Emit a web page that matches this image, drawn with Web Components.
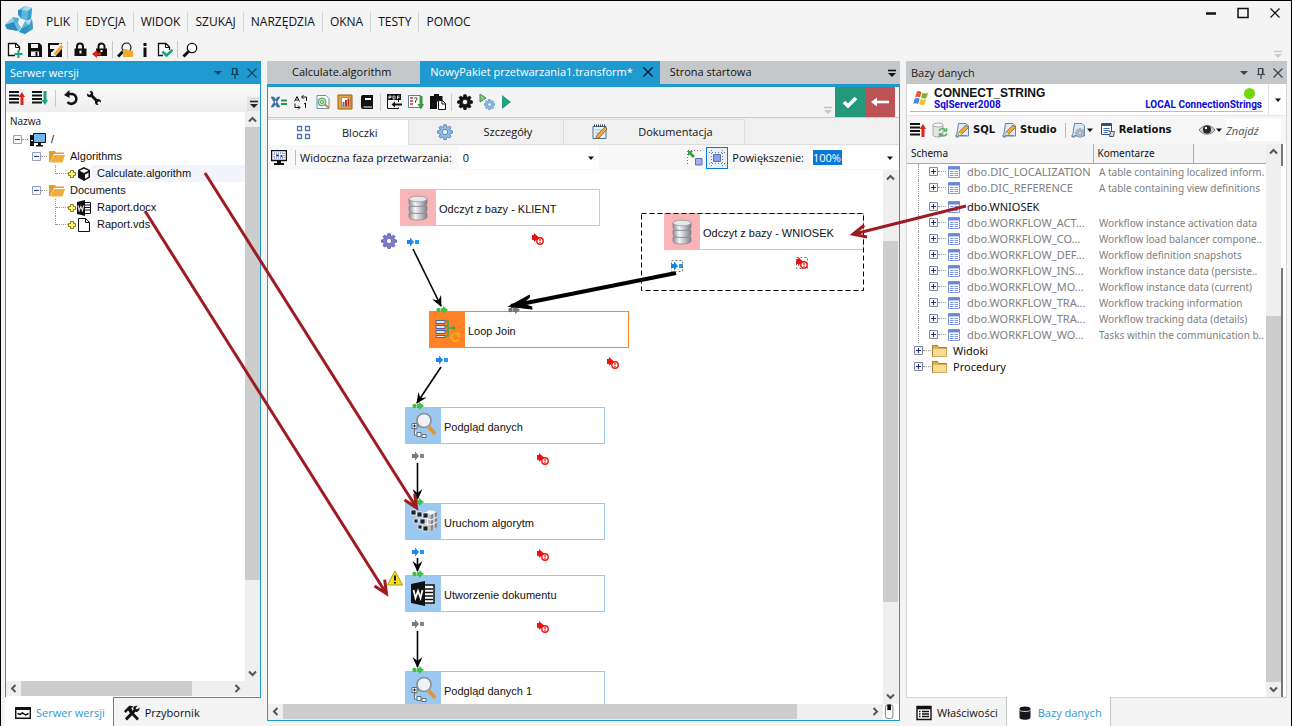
<!DOCTYPE html>
<html lang="pl">
<head>
<meta charset="utf-8">
<title>NowyPakiet przetwarzania1.transform</title>
<style>
  html, body { margin: 0; height: 100%; }
  body {
    --ui: "Open Sans", "Noto Sans", sans-serif;
    --list: "Liberation Sans", Arial, sans-serif;
    --accent: #1f9ad0;
    --chrome: #f4f4f5;
    font: 11px/16px var(--ui);
    color: #111;
    background: var(--chrome);
    overflow: hidden;
  }
</style>
</head>
<body>
<app-shell></app-shell>
<script>
const RESET = `
  :host { box-sizing: border-box; }
  *, *::before { box-sizing: border-box; }
  button, input, select { font: inherit; color: inherit; margin: 0; padding: 0; border: 0; background: none; border-radius: 0; outline: 0; }
  button { display: inline-flex; align-items: center; justify-content: center; }
  a { color: inherit; text-decoration: none; }
`;

function define(name, css, html) {
  const tpl = document.createElement('template');
  tpl.innerHTML = `<style>${RESET}${css}</style>${html}`;
  customElements.define(name, class extends HTMLElement {
    constructor() {
      super();
      this.attachShadow({ mode: 'open' }).append(tpl.content.cloneNode(true));
    }
  });
}

/* ---------- icons, 16 x 16 unless a size is given ---------- */
const GEAR = (fill, stroke) => `<g fill="${fill}" stroke="${stroke}" stroke-width=".8"><path fill-rule="evenodd" d="M6.800.8h2.400l.4 2 1.300.5 1.700-1.200 1.400 1.400-1.100 1.800.5 1.200 2 .4v2.300l-2 .4-.5 1.300 1.100 1.700-1.500 1.500-1.700-1.100-1.200.5-.4 2h-2.400l-.4-2-1.200-.5-1.700 1.100-1.500-1.500 1.100-1.700-.5-1.300-2-.4V6.900l2-.4.5-1.200L2.100 3.500l1.400-1.400 1.700 1.200 1.200-.5zM8 5.300a2.700 2.700 0 1 0 0 5.400 2.700 2.700 0 0 0 0-5.400z"/></g>`;
const SHEET = `<path d="M4.500 1.500h7.500l2.500 2.500v10h-9a2 2 0 0 1-3 .5z" fill="#d9eafa" stroke="#5b87b8"/><path d="M1.500 13.500a1.500 1.500 0 0 0 3 0h8" fill="none" stroke="#5b87b8"/>`;
const PENCIL = `<path d="M5 10l7-7 2.500 2.500-7 7-3.300 1z" fill="#f2a73b" stroke="#9a6420" stroke-width=".8"/><path d="M5 10l2.500 2.500-3.300 1z" fill="#f7e3c0"/>`;
const LIST = `<path d="M0 2h10M0 5.500h10M0 9h10M0 12.500h10" stroke="#111" stroke-width="2"/>`;
const GLASS = `<circle cx="10" cy="6" r="4.700" fill="#fff" stroke="#111" stroke-width="1.300"/><path d="M6.500 9.500L1.500 14.500" stroke="#111" stroke-width="3"/>`;
const ICONS = {
  logo: [30, `<path d="M13 5l7-4 7 2-1 11-4 2-7-3z" fill="#5fb8db"/><path d="M20 1l7 2-4 3-6-1z" fill="#a5dbee"/><path d="M13 5l4 0-1 8-3-3z" fill="#2f93bf"/><path d="M23 6l4-3-1 11-4 2z" fill="#3d9ec8"/><path d="M0 20l8-8 6 1-1 5 3 5-3 3-11-2z" fill="#4fb0d6"/><path d="M0 20l8-8 1 5z" fill="#8ed0e8"/><path d="M0 20l9-3 4 9-11-2z" fill="#2c8dba"/><path d="M9 17l4 1 3 5-3 3z" fill="#6fc1e0"/><path d="M16 24l4-8 7-2 1 10-8 5-6-2z" fill="#5fb8db"/><path d="M20 16l7-2-3 6z" fill="#b4e1f1"/><path d="M24 20l3-6 1 10-5 3z" fill="#3d9ec8"/><path d="M16 24l8-4-1 7-3 2-6-2z" fill="#2f93bf"/>`],
  newdoc: [16, `<path d="M8 13.500H1.500v-12H9l3.500 3.500v3" fill="#fff" stroke="#111" stroke-width="1.300"/><path d="M8.500 1.500V5.500h4" fill="none" stroke="#111"/><path d="M7.500 12h8M11.500 8v8" stroke="#1fa080" stroke-width="2"/>`],
  save: [16, `<path d="M1 1h11.500L15 3.500V15H1z" fill="#111"/><path d="M4 2h7v4H4zM4 9.500h8V14H4z" fill="#f4f4f5"/><path d="M8.500 10h2v4h-2z" fill="#111"/>`],
  saveedit: [16, `<path d="M1 1h14v14H1z" fill="#111"/><path d="M3 3h8v4H3zM4 10h4v4H4z" fill="#f4f4f5"/><path d="M15 2.500L6 13" stroke="#f4f4f5" stroke-width="5"/><path d="M15 4L8 12.500" stroke="#f0ab33" stroke-width="3"/>`],
  lock: [16, `<path d="M5 7V4.500a3 3 0 0 1 6 0V7" fill="none" stroke="#111" stroke-width="2"/><path d="M2.500 6.500h12V14h-12z" fill="#111"/><path d="M7.500 8.500h2v3h-2z" fill="#fff"/>`],
  lockout: [16, `<path d="M6.500 7V4.500a3 3 0 0 1 6 0V7" fill="none" stroke="#111" stroke-width="2"/><path d="M4 6.500h11V14H4z" fill="#111"/><path d="M8.500 8h2v2h-2z" fill="#fff"/><path d="M0 12l5-4v2.500h4v3H5V16z" fill="#d8261a"/>`],
  findfolder: [16, `<circle cx="9.500" cy="5.500" r="4.500" fill="#f4f4f5" stroke="#111" stroke-width="1.200"/><path d="M6 9.500L1 14.500" stroke="#111" stroke-width="3"/><path d="M6 7h4l1 1.500h5V15H6z" fill="#f0ab33"/>`],
  info: [16, `<path d="M6.500 1h3v3h-3zM6.500 5.500h3V15h-3z" fill="#111"/>`],
  doccheck: [16, `<path d="M6 13.500H1.500v-12H9l3.500 3.500v3" fill="#fff" stroke="#111" stroke-width="1.300"/><path d="M8.500 1.500V5.500h4" fill="none" stroke="#111"/><path d="M5.500 9.500l4 4L15.500 8" fill="none" stroke="#1fa080" stroke-width="2.600"/>`],
  search: [16, GLASS],
  listup: [16, LIST + `<path d="M13 15V5" stroke="#d8261a" stroke-width="3"/><path d="M9.500 7L13 2l3 5z" fill="#d8261a"/>`],
  listdown: [16, LIST + `<path d="M13 1v11" stroke="#1fa080" stroke-width="3"/><path d="M9.500 10l3.500 5 3-5z" fill="#1fa080"/>`],
  undo: [16, `<path d="M5 4h4.500a5 5 0 1 1-5 8" fill="none" stroke="#111" stroke-width="2.600"/><path d="M1 5l5.500-5v8z" fill="#111"/>`],
  wrench: [16, `<path d="M5 5l7 7" stroke="#111" stroke-width="3"/><path d="M1 3.500L3.500 5 5 3.500 3.500 1C6 .5 8 2.500 7 5L5 7C2.500 8 .5 6 1 3.500zM15 12.500L12.500 11 11 12.500l1.500 2.500c-2.500.5-4-1.500-3.500-4l2-2c2.500-.5 4.500 1 4 3.500z" fill="#111"/>`],
  pc: [16, `<path d="M0 3h4v11H0z" fill="#111"/><path d="M1 8h2v1H1z" fill="#fff"/><path d="M3.500 1.500h12v9h-12z" fill="#6db7f2" stroke="#111"/><path d="M8 11h3v2h2v1.500H6V13h2z" fill="#111"/>`],
  folder: [16, `<path d="M0 2h6l1 1.500h8V5H5L1 13H0z" fill="#e89c28"/><path d="M5 6h11l-2.500 7.500H1z" fill="#f2ac3a"/>`],
  cube: [16, `<path d="M8 1l6 3v7.500L8 15l-6-3.500V4z" fill="#111"/><path d="M3.500 4.800L8 2.700l4.500 2.100L8 7z" fill="#fff"/><path d="M9 8.500l3.500-1.800v4.100L9 12.800z" fill="#fff"/>`],
  word: [16, `<path d="M8 2.500h6.500v11H8z" fill="#fff" stroke="#111"/><path d="M9 5h5M9 7.500h5M9 10h5" stroke="#111"/><path d="M1 2l8-2v16l-8-2z" fill="#111"/><path d="M2 5.500l1.200 5 1.600-4 1.600 4 1.300-5" fill="none" stroke="#ddd" stroke-width="1.200"/>`],
  page: [16, `<path d="M2.500 1.500h7l4 4v9h-11z" fill="#fff" stroke="#111"/><path d="M9.500 1.500v4h4" fill="none" stroke="#111"/>`],
  plus: [8, `<path d="M2.500.5h3v2h2v3h-2v2h-3v-2h-2v-3h2z" fill="#fbf56a" stroke="#857b22"/>`],
  xeq: [16, `<path d="M0 3h3l6 10H6zM9 3H6.500L0 13h2.500z" fill="#3a6ea5" stroke="#3a6ea5" stroke-width=".6"/><path d="M10 6.500h6M10 10h6" stroke="#2b9348" stroke-width="2"/>`],
  ab: [16, `<path d="M1.500 7.500L4 2.500l2.500 5M2.500 6h3" fill="none" stroke="#111"/><path d="M9 3h4.500v4M10.500 1L8.500 3l2 2M2 9.500v4h4.500M5 11.500l2 2-2 2M11 10l1.500-1v5" fill="none" stroke="#111"/>`],
  docview: [16, `<path d="M2 1.500h9l3 3v10H2z" fill="#fff" stroke="#6d8fb5"/><circle cx="7" cy="8" r="4" fill="#bfe5c4" stroke="#4aa157"/><circle cx="7" cy="8" r="1.500" fill="#fff" stroke="#4aa157"/><path d="M10 10.500l4 3.500" stroke="#d98a2b" stroke-width="2"/>`],
  chart: [16, `<path d="M1 1h14v14H1z" fill="#e8a33a" stroke="#96591a"/><path d="M4.500 3.500h9v9h-9z" fill="#fff" stroke="#96591a" stroke-width=".6"/><path d="M6.500 12V8" stroke="#3b78c4" stroke-width="2"/><path d="M9 12V6" stroke="#d8261a" stroke-width="2"/><path d="M11.500 12V4.500" stroke="#b03020" stroke-width="2"/>`],
  book: [16, `<path d="M2 3a2 2 0 0 1 2-2h10v14H4a2 2 0 0 1-2-2z" fill="#111"/><path d="M6 4h6v2H6z" fill="#fff"/><path d="M4.500 13h8.500" stroke="#fff"/>`],
  pdf: [16, `<path d="M1 0h14v6H1z" fill="#111"/><path d="M3 5V2h2v1.500H3M7 2v3h1.500l.5-.5v-2L8.500 2zM11.500 5V2h2M11.500 3.500h2" stroke="#fff" fill="none" stroke-width=".8"/><path d="M1.500 6v8.500h11V13.500M12.500 8V6" fill="none" stroke="#111"/><path d="M16 11.500H9V13.500L5.500 10.500 9 7.500V9.500h7z" fill="#111"/>`],
  export: [16, `<path d="M.5 1.500h12v12H.5z" fill="#fff" stroke="#5b7ea5"/><path d="M2 4h3M2 7h3M2 10h3" stroke="#c33" stroke-width="1.500"/><path d="M6.500 4.500c1-1.500 3-1 2.500.5L7.500 7v1.500" fill="none" stroke="#333"/><path d="M13 2v9" stroke="#3a9a44" stroke-width="3"/><path d="M9.500 10L13 15.500l3-5.500z" fill="#3a9a44"/>`],
  paste: [16, `<path d="M0 2h4V0h5v2h3.500v4H9L7 8v7H0z" fill="#111"/><path d="M8.500 6.500h4l3 3v6h-7z" fill="#fff" stroke="#111"/><path d="M12 6.500V10h3.500" fill="none" stroke="#111"/>`],
  geardark: [16, GEAR('#111', '#111')],
  gearblue: [16, GEAR('#8ebbe8', '#3f76b4')],
  gearviolet: [16, GEAR('#7d7dcf', '#5656a8')],
  playgear: [16, `<path d="M1 0l6 4-6 4z" fill="#8cc88c" stroke="#3f8f4c"/><g transform="translate(5 5) scale(.69)">${GEAR('#8ebbe8', '#3f76b4')}</g>`],
  play: [16, `<path d="M1 1l9 7-9 7z" fill="#1fa080"/>`],
  check: [16, `<path d="M2 8l4 4L14 4" fill="none" stroke="#fff" stroke-width="3.600"/>`],
  back: [18, `<path d="M4 9h14" stroke="#fff" stroke-width="2.600"/><path d="M0 9l6-4.500v9z" fill="#fff"/>`],
  blocks: [16, `<path d="M1.500 1.500h4v4h-4zM9.500 1.500h4v4h-4zM1.500 9.500h4v4h-4zM9.500 9.500h4v4h-4z" fill="#fff" stroke="#5379a8" stroke-width="1.300"/>`],
  notes: [16, `<path d="M1 2.500h13v12H1z" fill="#e6f1fb" stroke="#46709e"/><path d="M2 1.500h12" stroke="#333" stroke-dasharray="1 1" stroke-width="2"/><path d="M3 6h8M3 9h6" stroke="#9bbbdc"/><path d="M13 3l2 2-8 9-3 .5.500-3z" fill="#f2a73b" stroke="#8b5a1a" stroke-width=".8"/>`],
  screen: [16, `<path d="M.5.5h15v10H.5z" fill="#fff" stroke="#111" stroke-width="1.500"/><path d="M3 3h10v5H3z" fill="#fff" stroke="#3a50b8" stroke-dasharray="1 1"/><path d="M5 4.500h3v2H5zM9.500 5h2v2h-2z" fill="#2a3a9a"/><path d="M6 11h4v2h3v2H3v-2h3z" fill="#111"/>`],
  snap: [16, `<path d="M1 .5h15M.5 1v15" stroke="#777" stroke-dasharray="1 2"/><path d="M1 6V1h5L4.500 2.500 8 6 6 8 2.500 4.500z" fill="#35a53c"/><path d="M8.500 8.500h6.500v6.500H8.500z" fill="#9fb0e6" stroke="#5a6fc0"/>`],
  gridcenter: [16, `<path d="M0 2.500h16M0 13.500h16M2.500 0v16M13.500 0v16" stroke="#777" stroke-dasharray="1 2"/><path d="M4.500 4.500h7v7h-7z" fill="#8d9fe0" stroke="#5a6fc0"/>`],
  windows: [16, `<path d="M4 1.500c2-1 3 0 4.500.7L7 7.500C5 6.500 4 6.500 2 7.200z" fill="#e8592b"/><path d="M9.500 2.800c2 1 3.500.8 5.500.2L13.500 8c-2 .8-3.500.6-5.500-.2z" fill="#7db52d"/><path d="M1.700 8.500c2-.8 3-.7 5 .2L5.200 14c-2-1-3-1-5-.2z" fill="#3f8fd8"/><path d="M7.700 9c2 .9 3.500 1 5.500.3l-1.500 5.200c-2 .7-3.500.6-5.500-.3z" fill="#f5c02c"/>`],
  dbsync: [16, `<path d="M1 3v10c0 2.500 10 2.500 10 0V3" fill="#e3e5e3" stroke="#aaa"/><ellipse cx="6" cy="3" rx="5" ry="2" fill="#f8f8f8" stroke="#aaa"/><path d="M7 9c1-3 5-3 6-1M14.500 6v3h-3M15 11.500c-1 3-5 3-6.500 1M7.500 15v-3h3" fill="none" stroke="#4fae57" stroke-width="1.500"/>`],
  sheetedit: [16, SHEET + PENCIL],
  sheetgear: [16, SHEET + `<g transform="translate(5 6) scale(.62)">${GEAR('#b8bec6', '#6b7480')}</g>`],
  relations: [16, `<path d="M1.500 1.500h10v11h-10z" fill="#fff" stroke="#2f4f86"/><path d="M1.500 3h10" stroke="#2f4f86" stroke-width="2"/><path d="M3.500 6.500h6M3.500 8.500h6M3.500 10.500h4" stroke="#456bad"/><path d="M8 8l4 4" stroke="#4b6e8e"/><path d="M10.500 9.500h4l-1 5h-4z" fill="#d6e2ea" stroke="#555"/>`],
  eye: [16, `<path d="M0 8c4-6 12-6 16 0-4 5.500-12 5.500-16 0z" fill="#ccc" stroke="#777"/><circle cx="8" cy="7.500" r="4" fill="#222"/><circle cx="7" cy="6" r="1.200" fill="#fff"/>`],
  grid: [14, `<path d="M1.500 1.500h11v11h-11z" fill="#fff" stroke="#8298dc"/><path d="M1 3h12" stroke="#6f86d8" stroke-width="3"/><path d="M3 6.500h3.500M7.500 6.500H11M3 8.500h3.500M7.500 8.500H11M3 10.500h3.500M7.500 10.500H11" stroke="#7d9ae0"/>`],
  folderold: [15, `<path d="M.5 2.500h5l1 2h8v9H.5z" fill="#e0b350" stroke="#a87f2c"/><path d="M1 6h13.500v7.500H1z" fill="#f6dc92"/>`],
  monitor: [16, `<path d="M.7 2.700h14.600v10.600H.7z" fill="#fff" stroke="#111" stroke-width="1.400"/><path d="M0 2h16v3H0z" fill="#111"/><path d="M2.500 8.500l2.500 1L7.500 8l3 2 3-1.500" fill="none" stroke="#111" stroke-width="1.500"/>`],
  tools: [16, `<path d="M2 14.500L11 5" stroke="#111" stroke-width="3"/><path d="M9 3c1-2 3-2.500 4.500-2L11.500 3l1.500 1.500L15.500 2.500c.5 2-1 4.500-3.500 4.500z" fill="#111"/><path d="M14 14.500L6 6" stroke="#111" stroke-width="2.600"/><path d="M0 6l5-5c2-.5 3.500 0 4.500.8L7 3l1.500 2L6 7.500 4 5.500 1.500 8z" fill="#111"/>`],
  props: [16, `<path d="M1 1.500h14v13H1z" fill="#fff" stroke="#111" stroke-width="1.400"/><path d="M1 3h14" stroke="#111" stroke-width="2.600"/><path d="M3 6.500h1.500M6 6.500h7M3 9h1.500M6 9h7M3 11.500h1.500M6 11.500h7" stroke="#111" stroke-width="1.300"/>`],
  db: [16, `<path d="M2.500 4v8.500c0 3 11 3 11 0V4z" fill="#15161c"/><ellipse cx="8" cy="3.500" rx="5.500" ry="2" fill="#15161c"/><path d="M2.500 5c1 2 10 2 11 0" fill="none" stroke="#fff" stroke-width=".8"/>`],
  mouse: [16, `<path d="M1.500 2.500a2 2 0 0 1 2-2h4a2 2 0 0 1 2 2v10a2.500 2.500 0 0 1-2.500 2.500H4a2.500 2.500 0 0 1-2.500-2.500z" fill="#fff" stroke="#777"/><path d="M3.500 0h4v6h-4z" fill="#111"/>`],
  min: [12, `<path d="M1 6.500h10" stroke="#111" stroke-width="2.500"/>`],
  max: [12, `<path d="M1 1.500h10v9H1z" fill="none" stroke="#111" stroke-width="1.500"/>`],
  close: [12, `<path d="M1.500 1.500l9 9M10.500 1.500l-9 9" stroke="currentColor" stroke-width="1.200"/>`],
  pin: [12, `<path d="M3.500 7V1.500h4V7M8 1.500V7M2 7.500h8M6 8v4" fill="none" stroke="currentColor" stroke-width="1.200"/>`],
  caret: [8, `<path d="M1 2.500h6L4 6z" fill="currentColor"/>`],
  caretbig: [10, `<path d="M1 3h8L5 7z" fill="currentColor"/>`],
  more: [10, `<path d="M1 2.500h8" stroke="currentColor" stroke-width="1.600"/><path d="M1 5h8L5 9z" fill="currentColor"/>`],
  minus: [9, `<path d="M.5.5h8v8h-8z" fill="#f7f8fb" stroke="#98a2b4"/><path d="M2 4.500h5" stroke="#2b3fa0"/>`],
  expand: [9, `<path d="M.5.5h8v8h-8z" fill="#f7f8fb" stroke="#848c9c"/><path d="M2 4.500h5M4.500 2v5" stroke="#1c2c80"/>`],
  disks: [30, `<defs><linearGradient id="m"><stop offset="0" stop-color="#8c8f94"/><stop offset=".35" stop-color="#f4f5f6"/><stop offset="1" stop-color="#7e8187"/></linearGradient></defs><g fill="url(#m)" stroke="#7d8086" stroke-width=".7"><path d="M5 20v4c0 4 18 4 18 0v-4z"/><path d="M5 13v4.500c0 4 18 4 18 0V13z"/><path d="M5 6v4.500c0 4 18 4 18 0V6z"/></g><ellipse cx="14" cy="6" rx="9" ry="2.800" fill="#e6e8ea" stroke="#8b8e94" stroke-width=".7"/>`],
  join: [30, `<g fill="#dbe6f7" stroke="#4a62a0"><path d="M3 5.500h9v3H3zM3 10.500h9v3H3zM3 15.500h9v3H3zM3 20.500h9v2H3z"/></g><path d="M12 6h3v15h-3M12 11h3M12 16h3M15 13h5" fill="none" stroke="#3fa648" stroke-width="1.500"/><circle cx="20.500" cy="13" r="1.800" fill="#3fa648"/><path d="M25 19a4 4 0 1 0 1 5M22 18.500h3.500V22" fill="none" stroke="#f2b01e" stroke-width="1.800"/>`],
  preview: [30, `<path d="M3 12.500h5v5H3zM8 21.500h4v4H8zM13 23.500h4v3h-4zM5.500 18v6H8M8 15h3" fill="#fff" stroke="#5f6d7c"/><path d="M4 15h3M5.500 13.500v3" stroke="#333"/><path d="M20 16l6 7" stroke="#e89428" stroke-width="3.600"/><circle cx="15" cy="9.500" r="7" fill="#eef3f7" stroke="#8a8d92" stroke-width="1.600"/>`],
  cubes: [30, `<path d="M15 6l6-3 7 2v15l-7 4-6-3z" fill="#b9bdc2"/><path d="M15 6l6-3 7 2-6 3z" fill="#f1f3f4"/><path d="M22 8l6-3v15l-6 4z" fill="#83888f"/><path d="M15 11l7 2 6-3M15 16l7 2 6-3M18.500 7v16M25 6.500v16" fill="none" stroke="#fff"/><g stroke="#fff" stroke-width=".7" fill="#222"><path d="M2 3h5v5H2zM8 5h5v5H8zM14 6h5v5h-5zM5 12h4v4H5zM11 12h5v5h-5zM9 18h4v4H9zM14 19h5v5h-5z"/></g>`],
  wordbig: [30, `<path d="M15 6h10v18H15z" fill="#fff" stroke="#111" stroke-width="1.500"/><path d="M16 10h8M16 13.500h8M16 17h8M16 20.500h8" stroke="#111" stroke-width="1.600"/><path d="M2 5l14-3v25L2 24z" fill="#111"/><path d="M4.500 11l2 8 2.500-7 2.500 7 2-8" fill="none" stroke="#fff" stroke-width="1.800"/>`],
  warn: [16, `<path d="M8 1l7.500 14H.5z" fill="#f8e11a" stroke="#b39a12"/><path d="M8 5.500v5" stroke="#111" stroke-width="2"/><path d="M7 12h2v1.500H7z" fill="#111"/>`],
  outblue: [12, `<path d="M0 4h3V1.500L7 6l-4 4.500V8H0z" fill="#1c86ee"/><path d="M8 4h4v4H8z" fill="#1e9bf5"/>`],
  outgray: [12, `<path d="M0 4h3V1.500L7 6l-4 4.500V8H0z" fill="#7b7b7b"/><path d="M8 4h4v4H8z" fill="#858585"/>`],
  ingreen: [12, `<circle cx="2.500" cy="6" r="2.200" fill="#42c03f"/><path d="M5 4h2V2l5 4-5 4V8H5z" fill="#3cc540"/>`],
  ingray: [12, `<circle cx="2.500" cy="6" r="2.200" fill="#6e6e6e"/><path d="M5 4h2V2l5 4-5 4V8H5z" fill="#777"/>`],
  error: [12, `<path d="M0 2h2V0l5 4.500L2 9V7H0z" fill="#ee1111"/><circle cx="8" cy="8" r="3.200" fill="#fff" stroke="#ee1111" stroke-width="1.400"/><path d="M8 6v2.200M8 9v1" stroke="#ee1111" stroke-width="1.300"/>`],
};
customElements.define('ui-icon', class extends HTMLElement {
  connectedCallback() {
    if (this.shadowRoot) return;
    const [size, art] = ICONS[this.getAttribute('name')];
    this.attachShadow({ mode: 'open' }).innerHTML =
      `<style>:host{display:inline-flex;flex:none}svg{display:block}</style>
       <svg width="${size}" height="${size}" viewBox="0 0 ${size} ${size}" aria-hidden="true">${art}</svg>`;
  }
});
const icon = n => `<ui-icon name="${n}"></ui-icon>`;
const tool = (n, label = n) => `<button aria-label="${label}">${icon(n)}</button>`;

/* ---------- scroll bar: space before, thumb and space after as flex shares ---------- */
customElements.define('scroll-bar', class extends HTMLElement {
  connectedCallback() {
    if (this.shadowRoot) return;
    const [a, t, b] = this.getAttribute('parts').split(' ');
    const h = this.hasAttribute('horizontal');
    const arrow = d => `<svg width="15" height="15" viewBox="0 0 15 15"><path d="${d}" fill="none" stroke="#555" stroke-width="2"/></svg>`;
    this.attachShadow({ mode: 'open' }).innerHTML = `<style>
      :host{display:flex;flex:none;flex-direction:${h ? 'row' : 'column'};background:#efeff0}
      svg{display:block;flex:none}
      i{flex-basis:0;${h ? 'height' : 'width'}:15px}
      .thumb{background:#cdcdcd}
    </style>${arrow(h ? 'M9.500 4L6 7.500 9.500 11' : 'M4 9.500L7.500 6 11 9.500')}
    <i style="flex-grow:${a}"></i><i class="thumb" style="flex-grow:${t}"></i><i style="flex-grow:${b}"></i>
    ${arrow(h ? 'M5.500 4L9 7.500 5.500 11' : 'M4 5.500L7.500 9 11 5.500')}`;
  }
});

/* ---------- menu and main toolbar ---------- */
define('menu-bar', `
  :host { display: flex; align-items: center; height: 37px; padding-left: 4px; font-size: 12px; }
  nav { display: flex; flex: 1; margin-top: 5px; padding-left: 3px; }
  nav a { padding: 2px 7px; border-left: 1px solid #d3d5d7; }
  nav a:first-child { border-color: transparent; }
  .win { display: flex; gap: 20px; align-self: flex-start; padding: 6px 10px 0 0; }
`, `${icon('logo')}
  <nav>${['PLIK', 'EDYCJA', 'WIDOK', 'SZUKAJ', 'NARZĘDZIA', 'OKNA', 'TESTY', 'POMOC'].map(t => `<a href="#">${t}</a>`).join('')}</nav>
  <div class="win">${tool('min', 'Minimalizuj')}${tool('max', 'Maksymalizuj')}${tool('close', 'Zamknij')}</div>`);

define('tool-bar', `
  :host { display: flex; align-items: center; gap: var(--gap, 4px); }
  ::slotted(hr), hr { width: 1px; height: 17px; margin: 0 var(--sep, 0px); border: 0; background: #c6c8ca; flex: none; }
`, `<slot></slot>`);

define('main-tools', `
  :host { display: flex; height: 23px; padding: 0 8px 0 6px; align-items: center; justify-content: space-between; }
  .more { color: #c9cacc; margin-top: 8px; }
`, `<tool-bar>${tool('newdoc')}${tool('save')}${tool('saveedit')}<hr>${tool('lock')}${tool('lockout')}<hr>${tool('findfolder')}${tool('info')}${tool('doccheck')}<hr>${tool('search')}</tool-bar>
  <button class="more" aria-label="Więcej">${icon('more')}</button>`);

/* ---------- docked panel: title, content, bottom tabs ---------- */
define('dock-panel', `
  :host { display: grid; grid-template-rows: minmax(0, 1fr) 28px; min-width: 0; min-height: 0; --line: #d5d6d8; --bar: #c5c8ca; }
  :host([active]) { --line: var(--accent); --bar: var(--accent); }
  .frame { display: flex; flex-direction: column; min-height: 0; border: 1px solid var(--line); border-top: 0; background: #fff; }
  header { display: flex; align-items: center; gap: 6px; height: 23px; flex: none; margin: 0 -1px; padding: 0 4px 0 5px; background: var(--bar); color: #222; }
  h2 { font: inherit; margin: 0; flex: 1; }
  :host([active]) h2 { color: #fff; }
  header button { width: 11px; color: #38434a; }
  :host([active]) header button { color: #11415c; }
  ::slotted(.tabs) { display: flex; margin-top: -1px; }
`, `<section class="frame"><header><h2><slot name="title"></slot></h2>${tool('caretbig', 'Menu')}${tool('pin', 'Przypnij')}${tool('close', 'Zamknij')}</header><slot></slot></section>
  <slot name="tabs"></slot>`);

define('dock-tab', `
  :host { display: block; border: 0 solid #c3c5c7; z-index: 1; }
  a { display: flex; align-items: center; gap: 5px; height: 29px; padding: 3px 8px 0 10px; }
  :host([on]) { background: #fff; border-width: 0 1px; }
  :host([on]) a { color: #2b9bd3; }
  :host([edge]) { border-color: var(--accent); border-left-width: 0; }
`, `<a href="#"><slot></slot></a>`);

/* ---------- version server tree ---------- */
define('server-tree', `
  :host { display: flex; flex-direction: column; flex: 1; min-height: 0; font-family: var(--list); }
  .tools { display: flex; height: 28px; flex: none; padding-left: 3px; align-items: center; background: linear-gradient(#fbfbfb, #eee); }
  tool-bar { flex: 1; --gap: 7px; }
  .more { width: 13px; height: 14px; margin: 12px 0 0; background: #e2e3e5; color: #222; }
  .view { display: grid; flex: 1; min-height: 0; grid-template: minmax(0, 1fr) 15px 1px / minmax(0, 1fr) 15px; }
  .corner { background: #efeff0; }
  h3 { font: 10px/19px var(--ui); margin: 0; padding-left: 4px; }
  ul { list-style: none; margin: 0; padding: 0; }
  li { display: flex; align-items: center; height: 17px; padding-left: 7px; }
  .l2 { padding-left: 26px; }
  .l3 { padding-left: 49px; }
  .dots { width: 6px; border-top: 1px dotted #999; margin-right: 2px; }
  .branch { align-self: stretch; width: 13px; border-left: 1px dotted #999; display: flex; align-items: center; }
  .branch::before { content: ""; flex: 1; border-top: 1px dotted #999; }
  .last { height: 9px; align-self: flex-start; align-items: flex-end; }
  .sel { flex: 1; background: #f1f4fa; }
  span { padding: 0 5px; line-height: 17px; }
`, `<div class="tools"><tool-bar>${tool('listup')}${tool('listdown')}<hr>${tool('undo')}${tool('wrench')}</tool-bar><button class="more" aria-label="Więcej">${icon('more')}</button></div>
  <div class="view">
    <div><h3>Nazwa</h3>
      <ul>
        <li>${icon('minus')}<i class="dots"></i>${icon('pc')}<span>/</span></li>
        <li class="l2">${icon('minus')}<i class="dots"></i>${icon('folder')}<span>Algorithms</span></li>
        <li class="l3"><i class="branch last"></i>${icon('plus')}${icon('cube')}<span class="sel">Calculate.algorithm</span></li>
        <li class="l2">${icon('minus')}<i class="dots"></i>${icon('folder')}<span>Documents</span></li>
        <li class="l3"><i class="branch"></i>${icon('plus')}${icon('word')}<span>Raport.docx</span></li>
        <li class="l3"><i class="branch last"></i>${icon('plus')}${icon('page')}<span>Raport.vds</span></li>
      </ul>
    </div>
    <scroll-bar parts="0 451 86"></scroll-bar>
    <scroll-bar horizontal parts="0 168 37"></scroll-bar><i class="corner"></i>
  </div>`);

/* ---------- diagram ---------- */
define('flow-node', `
  :host { display: flex; position: absolute; width: 200px; height: 37px; border: 1px solid var(--c); background: #fff; font-family: var(--list); align-items: center; }
  .pic { display: flex; align-items: center; justify-content: center; width: 35px; height: 35px; background: var(--c); }
  .name { padding: 3px 0 0 3px; }
`, `<span class="pic"><slot name="pic"></slot></span><span class="name"><slot></slot></span>`);

/* Diagram coordinates, relative to the top left corner of the canvas. */
const NODES = [
  [132, 19, '#f8b4b6', 'disks', 'Odczyt z bazy - KLIENT'],
  [396, 43, '#f8b4b6', 'disks', 'Odczyt z bazy - WNIOSEK'],
  [161, 141, '#ff8226', 'join', 'Loop Join'],
  [137, 237, '#9bc8f0', 'preview', 'Podgląd danych'],
  [137, 333, '#9bc8f0', 'cubes', 'Uruchom algorytm'],
  [137, 405, '#9bc8f0', 'wordbig', 'Utworzenie dokumentu'],
  [137, 501, '#9bc8f0', 'preview', 'Podgląd danych 1'],
];
const MARKS = [
  ['gearviolet', 113, 63], ['outblue', 139, 66], ['error', 264, 63],
  ['outblue', 403, 90], ['error', 528, 87],
  ['ingreen', 168, 134], ['ingray', 240, 134], ['outblue', 168, 184], ['error', 339, 187],
  ['ingreen', 144, 230], ['outgray', 144, 280], ['error', 269, 283],
  ['ingreen', 144, 326], ['outblue', 144, 376], ['error', 269, 379],
  ['ingreen', 144, 398], ['outgray', 144, 448], ['error', 269, 451],
  ['ingreen', 144, 494], ['warn', 119, 400],
];
define('flow-canvas', `
  :host { display: block; position: relative; overflow: hidden; background: #fff; }
  svg { position: absolute; inset: 0; width: 100%; height: 100%; }
  .mark { position: absolute; }
`, NODES.map(([x, y, c, p, t]) => `<flow-node style="left:${x}px;top:${y}px;--c:${c}"><ui-icon slot="pic" name="${p}"></ui-icon>${t}</flow-node>`).join('') +
  MARKS.map(([n, x, y]) => `<ui-icon class="mark" name="${n}" style="left:${x}px;top:${y}px"></ui-icon>`).join('') + `
  <svg fill="none" stroke="#000">
    <defs>
      <marker id="thin" markerUnits="userSpaceOnUse" markerWidth="14" markerHeight="12" refX="10" refY="5" orient="auto"><path d="M0 0l11 5-11 5 4-5z" fill="#000" stroke="none"/></marker>
      <marker id="thick" markerUnits="userSpaceOnUse" markerWidth="26" markerHeight="18" refX="22" refY="8" orient="auto"><path d="M2 1l22 7L2 15l0-2 9-5L2 3z" fill="#000" stroke="#000"/></marker>
    </defs>
    <g stroke-width="1.600">
      <path d="M145 79L173 136" marker-end="url(#thin)"/><path d="M173 197L149 233" marker-end="url(#thin)"/>
      <path d="M149.500 293V329" marker-end="url(#thin)"/><path d="M149.500 388V401" marker-end="url(#thin)"/>
      <path d="M149.500 461V497" marker-end="url(#thin)"/>
    </g>
    <path d="M408 103L243 136" stroke-width="4" marker-end="url(#thick)"/>
    <rect x="373.500" y="43.500" width="222" height="77" stroke-dasharray="5 3"/>
    <g stroke="#777" stroke-dasharray="2 2"><rect x="403.500" y="90.500" width="11" height="11"/><rect x="528.500" y="87.500" width="11" height="11"/></g>
  </svg>`);

/* ---------- editor in the middle ---------- */
define('editor-area', `
  :host { display: flex; flex-direction: column; min-width: 0; min-height: 0; margin-bottom: 5px; border: 1px solid var(--accent); border-top: 0; background: var(--chrome); }
  .files { display: flex; height: 26px; flex: none; margin: 0 -1px; background: #c5c8ca; border-bottom: 3px solid var(--accent); }
  .files a { display: flex; align-items: center; padding: 0 29px 2px 25px; }
  .files .on { background: var(--accent); color: #fff; gap: 9px; padding: 0 6px 2px 10px; }
  .files .on button { color: #113; }
  .files .on + a { padding-left: 10px; }
  .files > button { margin-left: auto; padding-right: 3px; }
  .tools { display: flex; height: 31px; flex: none; padding-left: 3px; padding-right: 4px; border-bottom: 1px solid #c9cbcc; }
  .tools tool-bar { flex: 1; --gap: 6px; --sep: -1px; }
  .tools .more { align-self: flex-end; margin: 0 2px 2px; color: #c2c3c5; }
  .ok, .no { width: 30px; background: #24987a; }
  .no { background: #bb5254; }
  .views { display: flex; height: 27px; flex: none; padding-top: 1px; background: #f0f0f1; border-bottom: 1px solid #ddd; }
  .views a { display: flex; align-items: center; gap: 30px; padding: 0 31px 0 28px; border: solid #dcdddf; border-width: 1px 1px 0 0; }
  .views .on { background: #fff; margin-bottom: -1px; }
  .filter { display: flex; align-items: center; height: 25px; flex: none; padding-left: 3px; background: #f8f8f9; }
  .filter hr { width: 1px; height: 15px; border: 0; background: #bbb; margin: 0 4px 0 8px; }
  .filter label { white-space: nowrap; }
  select { appearance: none; width: 140px; height: 23px; margin-left: 7px; padding-left: 4px; background: #fff; }
  .drop { margin-left: -12px; pointer-events: none; }
  .toggle { width: 22px; height: 22px; margin: 0 4px 0 3px; border: 1px solid #0a78d7; background: #e8f1fa; }
  .push { margin-left: auto; }
  .combo { display: flex; align-items: center; justify-content: space-between; width: 88px; height: 23px; margin-left: 7px; padding: 0 5px 0 2px; background: #fff; }
  .combo input { width: 29px; height: 15px; background: #0a78d7; color: #fff; }
  .view { display: grid; flex: 1; min-height: 0; grid-template: minmax(0, 1fr) 16px / minmax(0, 1fr) 16px; background: #fff; }
  .view > ui-icon { align-self: center; padding-left: 1px; }
`, `<nav class="files"><a href="#">Calculate.algorithm</a><a href="#" class="on">NowyPakiet przetwarzania1.transform*<button aria-label="Zamknij kartę">${icon('close')}</button></a><a href="#">Strona startowa</a><button aria-label="Lista kart">${icon('more')}</button></nav>
  <div class="tools"><tool-bar>${['xeq', 'ab', 'docview', 'chart', 'book'].map(n => tool(n)).join('')}<hr>${tool('pdf')}${tool('export')}${tool('paste')}<hr>${tool('geardark')}${tool('playgear')}${tool('play')}</tool-bar>
    <button class="more" aria-label="Więcej">${icon('more')}</button><button class="ok" aria-label="Zatwierdź">${icon('check')}</button><button class="no" aria-label="Cofnij">${icon('back')}</button></div>
  <nav class="views"><a href="#" class="on">${icon('blocks')}Bloczki</a><a href="#">${icon('gearblue')}Szczegóły</a><a href="#">${icon('notes')}Dokumentacja</a></nav>
  <div class="filter">${tool('screen')}<hr><label for="phase">Widoczna faza przetwarzania:</label><select id="phase"><option>0</option></select><ui-icon class="drop" name="caret"></ui-icon>
    <button class="push" aria-label="Przyciągaj">${icon('snap')}</button><button class="toggle" aria-label="Siatka">${icon('gridcenter')}</button>
    <label for="zoom">Powiększenie:</label><span class="combo"><input id="zoom" value="100%">${tool('caret', 'Rozwiń')}</span></div>
  <div class="view"><flow-canvas></flow-canvas><scroll-bar parts="56 359 87"></scroll-bar>
    <scroll-bar horizontal parts="0 512 71"></scroll-bar>${icon('mouse')}</div>`);

/* ---------- database browser ---------- */
const ROWS = [
  ['DIC_LOCALIZATION', 'A table containing localized inform.'],
  ['DIC_REFERENCE', 'A table containing view definitions'],
  ['WNIOSEK', ''],
  ['WORKFLOW_ACT...', 'Workflow instance activation data'],
  ['WORKFLOW_CO...', 'Workflow load balancer compone..'],
  ['WORKFLOW_DEF...', 'Workflow definition snapshots'],
  ['WORKFLOW_INS...', 'Workflow instance data (persiste..'],
  ['WORKFLOW_MO...', 'Workflow instance data (current)'],
  ['WORKFLOW_TRA...', 'Workflow tracking information'],
  ['WORKFLOW_TRA...', 'Workflow tracking data (details)'],
  ['WORKFLOW_WO...', 'Tasks within the communication b..'],
];
define('db-browser', `
  :host { display: flex; flex-direction: column; flex: 1; min-height: 0; }
  .conn { display: flex; height: 32px; flex: none; border-bottom: 1px solid #e6e6e8; }
  .conn > div { display: grid; flex: 1; grid-template: 13px 9px / 16px 1fr auto; column-gap: 5px; margin: 3px 5px 3px 3px; padding: 0 1px 3px 3px; border-bottom: 1px solid #bbb; align-items: center; }
  .conn ui-icon { grid-row: 1 / 3; }
  .conn b { font: bold 12px/13px var(--list); }
  .conn small { font: bold 10px/9px Roboto, sans-serif; color: #0a0ae0; grid-row: 2; }
  .dot { width: 11px; height: 11px; border-radius: 50%; background: #6fd80a; justify-self: end; margin-right: 7px; }
  .conn button { width: 18px; border-left: 1px solid #e2e2e4; }
  .tools { display: flex; align-items: center; height: 28px; flex: none; padding-left: 3px; background: #f6f6f7; font: bold 10px/16px "DejaVu Sans", sans-serif; }
  .tools button { gap: 3px; margin-right: 6px; }
  .tools .pair { gap: 0; }
  .tools hr { width: 1px; height: 15px; margin: 0 4px 0 2px; border: 0; background: #bbb; }
  .tools .eye { margin: 0 3px 0 auto; }
  .tools input { width: 55px; height: 22px; background: #fff; font: italic 11px/16px "Noto Sans", sans-serif; margin-right: 5px; }
  input::placeholder { color: #555; opacity: 1; }
  .view { display: flex; flex: 1; min-height: 0; }
  .list { flex: 1; min-width: 0; }
  .edge { width: 2px; margin: 0 3px 0 0; background: linear-gradient(#777 0 22px, transparent 22px 124px, #777 124px); }
  table { width: 100%; border-collapse: collapse; table-layout: fixed; font: 10px/16px "Noto Sans", sans-serif; color: #808080; }
  th { height: 19px; padding: 0 4px; text-align: left; font-weight: normal; color: #111; background: #f3f3f3; border-right: 1px solid #aaa; border-bottom: 1px solid #aaa; }
  th:last-child { border-right: 0; }
  td { height: 16px; padding: 0; white-space: nowrap; overflow: hidden; }
  td + td { padding-left: 6px; }
  .key { color: #111; }
  .key .cell { padding-top: 3px; }
  .cell { display: flex; align-items: center; margin-left: 11px; padding-left: 10px; border-left: 1px dotted #999; }
  .cell.top { padding-left: 0; margin-left: 7px; border: 0; color: #111; }
  .dots { width: 8px; margin-right: 1px; border-top: 1px dotted #999; }
  .cell span { padding-left: 6px; font-size: 11px; line-height: 16px; }
`, `<div class="conn"><div>${icon('windows')}<b>CONNECT_STRING</b><i class="dot"></i><small>SqlServer2008</small><small>LOCAL ConnectionStrings</small></div>${tool('caret', 'Połączenia')}</div>
  <div class="tools">${tool('listup')}${tool('dbsync')}<button>${icon('sheetedit')}SQL</button><button>${icon('sheetedit')}Studio</button><hr><button class="pair" aria-label="Skrypty">${icon('sheetgear')}${icon('caret')}</button><button>${icon('relations')}Relations</button><button class="pair eye" aria-label="Widoczność">${icon('eye')}${icon('caret')}</button><input placeholder="Znajdź" aria-label="Znajdź"></div>
  <div class="view"><div class="list"><table>
    <colgroup><col style="width:186px"><col style="width:100px"><col></colgroup>
    <thead><tr><th>Schema</th><th>Komentarze</th><th></th></tr></thead>
    <tbody>${ROWS.map(([n, c]) => `<tr${c ? '' : ' class="key"'}><td><div class="cell">${icon('expand')}<i class="dots"></i>${icon('grid')}<span>dbo.${n}</span></div></td><td colspan="2">${c}</td></tr>`).join('')}
    ${['Widoki', 'Procedury'].map(n => `<tr><td colspan="3"><div class="cell top">${icon('expand')}<i class="dots"></i>${icon('folderold')}<span>${n}</span></div></td></tr>`).join('')}</tbody>
  </table></div><scroll-bar parts="156 365 0"></scroll-bar><i class="edge"></i></div>`);

/* ---------- whole window ---------- */
define('app-shell', `
  :host { display: flex; flex-direction: column; position: relative; height: 100vh; min-height: 480px; border: 1px solid #000; border-bottom: 0; background: var(--chrome); overflow: hidden; }
  main { display: grid; flex: 1; min-height: 0; grid-template-columns: 256px minmax(0, 1fr) 381px; gap: 6px; padding: 0 4px; }
  .links { position: absolute; inset: 0; width: 100%; height: 100%; pointer-events: none; }
`, `<menu-bar></menu-bar><main-tools></main-tools>
  <main>
    <dock-panel active><span slot="title">Serwer wersji</span><server-tree></server-tree>
      <nav class="tabs" slot="tabs"><dock-tab on edge>${icon('monitor')}Serwer wersji</dock-tab><dock-tab>${icon('tools')}Przybornik</dock-tab></nav></dock-panel>
    <editor-area></editor-area>
    <dock-panel><span slot="title">Bazy danych</span><db-browser></db-browser>
      <nav class="tabs" slot="tabs"><dock-tab>${icon('props')}Właściwości</dock-tab><dock-tab on>${icon('db')}Bazy danych</dock-tab></nav></dock-panel>
  </main>
  <svg class="links" fill="none" stroke="#9f1b22" stroke-width="3">
    <defs><marker id="tip" markerUnits="userSpaceOnUse" markerWidth="22" markerHeight="18" refX="15" refY="8" orient="auto"><path d="M3 2l13 6-13 6" fill="none" stroke="#9f1b22" stroke-width="3"/></marker></defs>
    <path d="M204 172L415 506" marker-end="url(#tip)"/><path d="M144 210L385 592" marker-end="url(#tip)"/><path d="M965 205L853 233" marker-end="url(#tip)"/>
  </svg>`);
</script>
</body>
</html>
